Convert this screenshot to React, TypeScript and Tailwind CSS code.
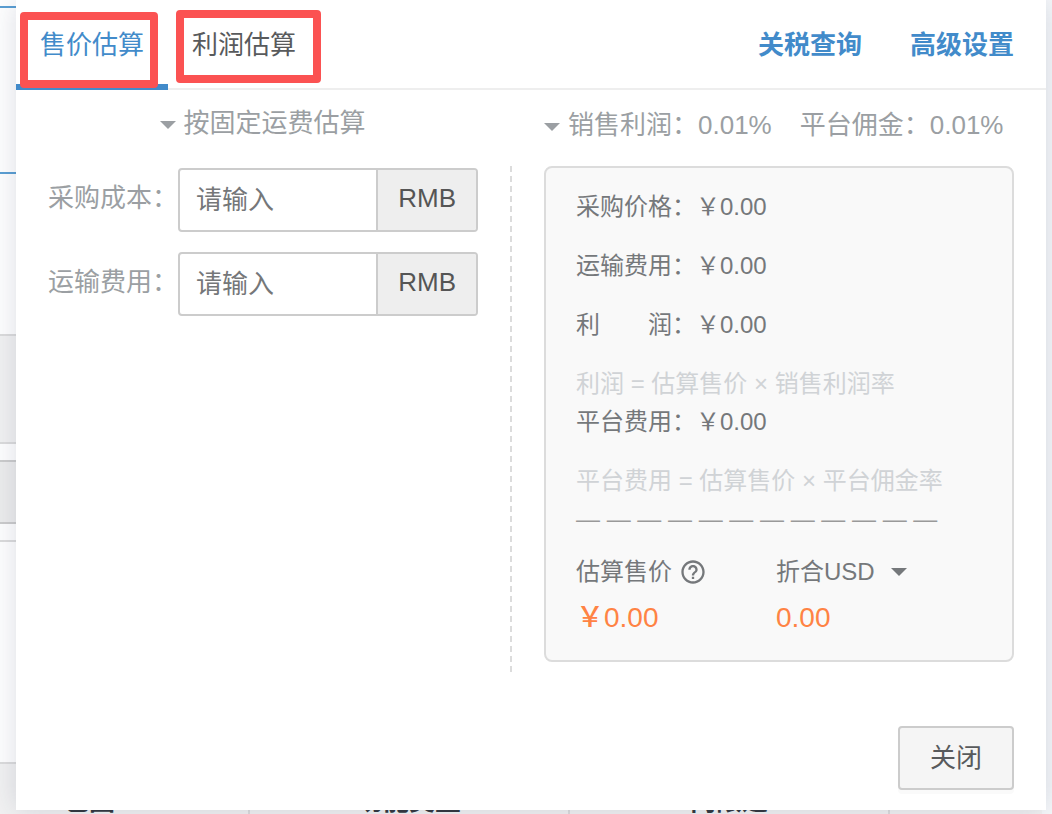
import { MdHelpOutline } from "react-icons/md";

const costFields = [
  { id: "purchase-cost", label: "采购成本：" },
  { id: "shipping-fee", label: "运输费用：" },
];

const dashes = Array(12).fill("—").join(" ");

function Caret() {
  return (
    <svg viewBox="0 0 16 8" className="w-4 h-2 shrink-0 fill-current" aria-hidden="true">
      <path d="M0 0h16L8 8z" />
    </svg>
  );
}

// Listing form that stays partly visible around the dialog
function PageBehind() {
  return (
    <div className="[grid-area:1/1] flex bg-white overflow-hidden" aria-hidden="true">
      <div className="flex-1 flex flex-col">
        <div className="mt-[6px] h-[168px] border-y-2 border-[#5b9fd3]" />
        <div className="mt-40 h-[110px] border-y-2 border-[#dcdcdc] bg-[#f2f2f2]" />
        <div className="mt-4 h-16 border-y-2 border-[#cccccc] bg-[#ededed]" />
        <div className="mt-4 border-t-2 border-[#dcdcdc]" />
        <div className="mt-[220px] h-[52px] flex border-t-2 border-[#dcdcdc] bg-[#f2f2f2] text-[26px] leading-[26px] font-bold text-[#33383f] text-center">
          <div className="w-[250px] pt-6 pr-[70px] border-r-2 border-[#dcdcdc]">包图</div>
          <div className="w-80 pt-6 border-r-2 border-[#dcdcdc]">功能类型</div>
          <div className="w-80 pt-6 border-r-2 border-[#dcdcdc]">内限速</div>
        </div>
      </div>
      <div className="w-[10px] bg-[#f6f8fa]" />
    </div>
  );
}

function Amount({ label, value }: { label: string; value: string }) {
  return (
    <p className="h-[38px] whitespace-pre">
      {label}
      {value}
    </p>
  );
}

export default function App() {
  return (
    <div className="grid h-full min-h-screen overflow-hidden font-['Liberation_Sans','Noto_Sans_CJK_SC',sans-serif] text-[26px] text-[#9b9fa3]">
      <PageBehind />

      <div
        role="dialog"
        aria-label="售价估算"
        className="[grid-area:1/1] relative ml-4 mr-[6px] mb-1 flex flex-col bg-white shadow-[0_0_28px_rgba(31,45,90,0.16)]"
      >
        {/* Tabs */}
        <header className="h-[90px] flex items-stretch justify-between border-b-2 border-[#eeeeee] leading-[90px]">
          <div className="flex h-[90px]" role="tablist">
            <div className="relative flex">
              <button
                role="tab"
                aria-selected="true"
                className="h-[90px] px-6 border-b-6 border-[#428bca] text-[#428bca]"
              >
                售价估算
              </button>
              <span className="absolute left-1 top-3 w-[138px] h-[76px] border-8 border-[#fb5252] rounded-[4px] pointer-events-none" />
            </div>
            <div className="relative flex">
              <button role="tab" aria-selected="false" className="h-[90px] px-6 border-b-6 border-transparent text-[#585a5c]">
                利润估算
              </button>
              <span className="absolute left-2 top-[10px] w-[145px] h-[73px] border-8 border-[#fb5252] rounded-[4px] pointer-events-none" />
            </div>
          </div>
          <nav className="flex gap-12 pr-8 font-bold text-[#428bca]">
            <a href="#tariff">关税查询</a>
            <a href="#settings">高级设置</a>
          </nav>
        </header>

        <div className="grid grid-cols-[496fr_534fr] grid-rows-[76px_auto]">
          <label className="flex items-center justify-center gap-2 pb-[10px] pr-[2px]">
            <span className="pt-1">
              <Caret />
            </span>
            <select aria-label="估算方式" className="appearance-none bg-transparent">
              <option>按固定运费估算</option>
            </select>
          </label>
          <button aria-expanded="false" className="flex items-center gap-2 pl-8 pb-[6px] whitespace-nowrap">
            <span className="pt-1">
              <Caret />
            </span>
            <span>销售利润：0.01%</span>
            <span className="ml-5">平台佣金：0.01%</span>
          </button>

          {/* Cost inputs */}
          <div className="flex flex-col gap-5 pl-8 pt-[2px] border-r-2 border-dashed border-[#dcdcdc]">
            {costFields.map((field) => (
              <div key={field.id} className="flex">
                <label htmlFor={field.id} className="h-16 leading-[60px] whitespace-nowrap">
                  {field.label}
                </label>
                <div className="flex w-[300px] h-16 border-2 border-[#cccccc] rounded-[4px] overflow-hidden">
                  <input
                    id={field.id}
                    type="text"
                    placeholder="请输入"
                    className="min-w-0 flex-1 px-4 text-[#555555] placeholder:text-[#757779] outline-none"
                  />
                  <span className="px-5 border-l-2 border-[#cccccc] bg-[#eeeeee] text-[#555555] leading-[56px]">
                    RMB
                  </span>
                </div>
              </div>
            ))}
          </div>

          {/* Estimate result */}
          <section className="ml-8 mr-8 mb-[10px] px-[30px] pt-5 pb-[23px] border-2 border-[#dcdcdc] rounded-lg bg-[#f9f9f9] text-2xl leading-[38px] text-[#75787b]">
            <div className="flex flex-col gap-[21px]">
              <Amount label="采购价格：" value="￥0.00" />
              <Amount label="运输费用：" value="￥0.00" />
              <Amount label="利　　润：" value="￥0.00" />
              <p className="h-[38px] text-[#d0d3d6]">利润 = 估算售价 × 销售利润率</p>
            </div>
            <div className="flex flex-col gap-[21px]">
              <Amount label="平台费用：" value="￥0.00" />
              <p className="h-[38px] text-[#d0d3d6]">平台费用 = 估算售价 × 平台佣金率</p>
            </div>
            <p className="h-[38px] whitespace-nowrap text-[#999999]">{dashes}</p>
            <div className="mt-[15px] grid grid-cols-[200px_1fr] gap-y-2">
              <div className="flex items-center gap-[7px] h-[38px]">
                <span>估算售价</span>
                <MdHelpOutline className="w-7 h-7" />
              </div>
              <label className="flex flex-row-reverse items-center justify-end gap-4 h-[38px]">
                <Caret />
                <select aria-label="折合币种" className="appearance-none bg-transparent">
                  <option>折合USD</option>
                </select>
              </label>
              <p className="h-[38px] text-[28px] text-[#ff8344]">
                <span className="font-medium">￥</span>0.00
              </p>
              <p className="h-[38px] text-[28px] text-[#ff8344]">0.00</p>
            </div>
          </section>
        </div>

        <footer className="mt-auto flex justify-end pt-[54px] pr-8 pb-5">
          <button className="h-16 px-[30px] border-2 border-[#cccccc] rounded-[4px] bg-[#f5f5f5] text-[#585a5c] shadow-[0_4px_0_#fafafa]">
            关闭
          </button>
        </footer>
      </div>
    </div>
  );
}
